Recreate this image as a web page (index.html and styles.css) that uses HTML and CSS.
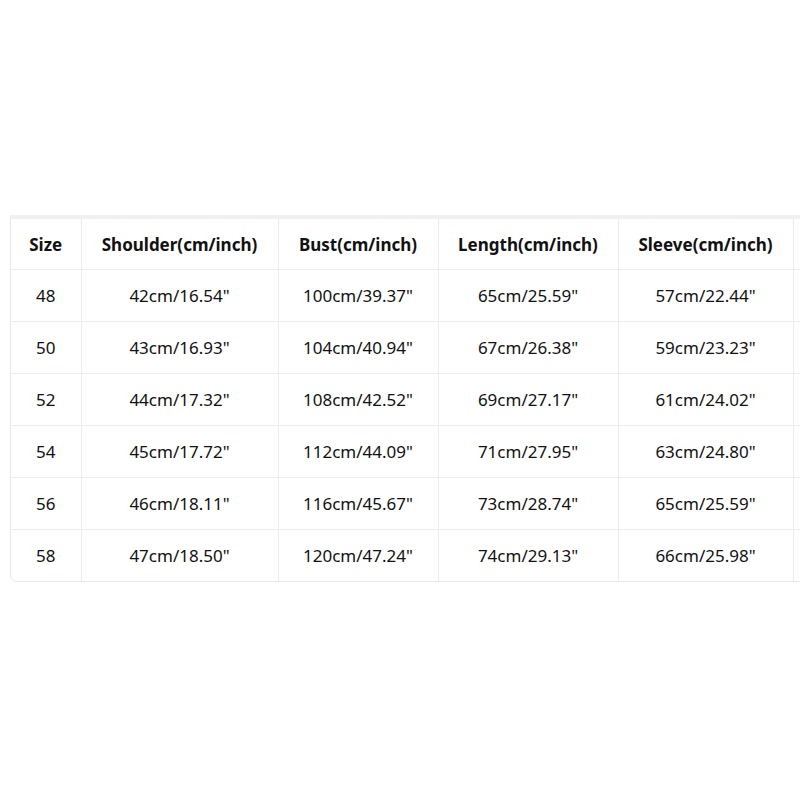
FILE: index.html
```html
<!DOCTYPE html>
<html lang="en">
<head>
    <meta charset="UTF-8">
    <meta name="viewport" content="width=device-width, initial-scale=1.0">
    <title>Size Chart</title>
    <link rel="stylesheet" href="styles.css">
</head>
<body>
    <div class="chart">
        <table class="size-table">
            <colgroup>
                <col class="c-size">
                <col class="c-shoulder">
                <col class="c-bust">
                <col class="c-length">
                <col class="c-sleeve">
                <col class="c-extra">
            </colgroup>
            <tr>
                <th>Size</th>
                <th>Shoulder(cm/inch)</th>
                <th>Bust(cm/inch)</th>
                <th>Length(cm/inch)</th>
                <th>Sleeve(cm/inch)</th>
                <th></th>
            </tr>
            <tr>
                <td>48</td><td>42cm/16.54"</td><td>100cm/39.37"</td><td>65cm/25.59"</td><td>57cm/22.44"</td><td></td>
            </tr>
            <tr>
                <td>50</td><td>43cm/16.93"</td><td>104cm/40.94"</td><td>67cm/26.38"</td><td>59cm/23.23"</td><td></td>
            </tr>
            <tr>
                <td>52</td><td>44cm/17.32"</td><td>108cm/42.52"</td><td>69cm/27.17"</td><td>61cm/24.02"</td><td></td>
            </tr>
            <tr>
                <td>54</td><td>45cm/17.72"</td><td>112cm/44.09"</td><td>71cm/27.95"</td><td>63cm/24.80"</td><td></td>
            </tr>
            <tr>
                <td>56</td><td>46cm/18.11"</td><td>116cm/45.67"</td><td>73cm/28.74"</td><td>65cm/25.59"</td><td></td>
            </tr>
            <tr>
                <td>58</td><td>47cm/18.50"</td><td>120cm/47.24"</td><td>74cm/29.13"</td><td>66cm/25.98"</td><td></td>
            </tr>
        </table>
    </div>
</body>
</html>
```

FILE: styles.css
```css
body {
    margin: 0;
    padding: 215px 0 0 10px;
    font-family: "Noto Sans", "Open Sans", Arial, sans-serif;
    color: #111;
    background: #fff;
    overflow: hidden;
}
.chart {
    width: 960px;
    border-top: 4px solid #f1f1f1;
    border-left: 1px solid #e8e8e8;
    border-bottom: 1px solid #e8e8e8;
    border-bottom-left-radius: 7px;
    overflow: hidden;
}
.size-table {
    border-collapse: collapse;
    table-layout: fixed;
    width: 100%;
}
.c-size { width: 70px; }
.c-shoulder { width: 197px; }
.c-bust { width: 160px; }
.c-length { width: 180px; }
.c-sleeve { width: 175px; }
th, td {
    border-right: 1px solid #ececec;
    border-bottom: 1px solid #ececec;
    height: 51px;
    padding: 0;
    text-align: center;
    font-size: 17px;
    white-space: nowrap;
}
th {
    font-weight: 700;
    height: 50px;
}
tr:last-child td {
    border-bottom: none;
}
```
